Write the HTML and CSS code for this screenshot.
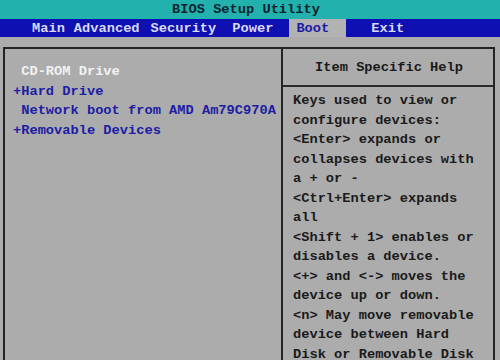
FILE: index.html
```html
<!DOCTYPE html>
<html lang="en">
<head>
  <meta charset="UTF-8" />
  <title>BIOS Setup Utility</title>
  <link rel="stylesheet" href="styles.css">
</head>
<body>

  <header class="title">BIOS Setup Utility</header>

  <nav class="menu">
    <span class="menu-item main">Main</span>
    <span class="menu-item advanced">Advanced</span>
    <span class="menu-item security">Security</span>
    <span class="menu-item power">Power</span>
    <span class="menu-item boot active">Boot</span>
    <span class="menu-item exit">Exit</span>
  </nav>

  <main class="frame">
    <section class="items">
      <div class="item selected"> CD-ROM Drive</div>
      <div class="item">+Hard Drive</div>
      <div class="item"> Network boot from AMD Am79C970A</div>
      <div class="item">+Removable Devices</div>
    </section>

    <aside class="help">
      <div class="help-title">Item Specific Help</div>
      <p class="help-body">
        Keys used to view or<br>
        configure devices:<br>
        &lt;Enter&gt; expands or<br>
        collapses devices with<br>
        a + or -<br>
        &lt;Ctrl+Enter&gt; expands<br>
        all<br>
        &lt;Shift + 1&gt; enables or<br>
        disables a device.<br>
        &lt;+&gt; and &lt;-&gt; moves the<br>
        device up or down.<br>
        &lt;n&gt; May move removable<br>
        device between Hard<br>
        Disk or Removable Disk
      </p>
    </aside>
  </main>

</body>
</html>
```

FILE: styles.css
```css
body {
  margin: 0;
  height: 360px;
  overflow: hidden;
  background: #acacac;
  font-family: "Liberation Mono", "DejaVu Sans Mono", monospace;
  font-size: 13.7px;
  font-weight: bold;
  line-height: 19.5px;
}
.title {
  height: 19px;
  line-height: 20px;
  background: #22b1ad;
  color: #0b2430;
  text-align: center;
  padding-right: 8px;
}
.menu {
  display: flex;
  height: 18px;
  line-height: 19px;
  background: #0f10b2;
  color: #d6daf6;
  padding-left: 32px;
}
.menu-item.main { margin-right: 9px; }
.menu-item.advanced { margin-right: 11px; }
.menu-item.security { margin-right: 16px; }
.menu-item.power { margin-right: 16px; }
.menu-item.active {
  background: #b2b2b2;
  color: #1a1aa6;
  padding: 0 17px 0 7px;
  margin-right: 25px;
}
.frame {
  display: grid;
  grid-template-columns: 276px 1fr;
  width: 488px;
  height: 311px;
  margin: 10px 0 0 3px;
  border: 2px solid #232323;
  overflow: hidden;
}
.items {
  padding: 13px 0 0 8px;
  color: #1c1ca4;
}
.item {
  white-space: pre;
}
.item.selected {
  color: #f2f2f2;
}
.help {
  border-left: 2px solid #232323;
  color: #1a1a1a;
}
.help-title {
  height: 36px;
  line-height: 38px;
  text-align: center;
  border-bottom: 2px solid #2a2a2a;
  padding-left: 2px;
}
.help-body {
  margin: 0;
  padding: 4px 0 0 10px;
  white-space: nowrap;
}
```
